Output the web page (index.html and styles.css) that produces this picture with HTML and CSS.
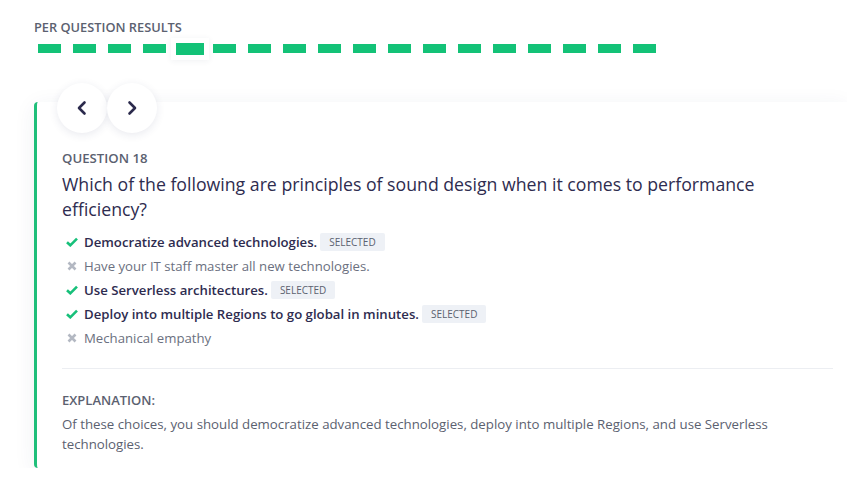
FILE: index.html
```html
<!DOCTYPE html>
<html>
<head>
<meta charset="utf-8">
<link rel="stylesheet" href="styles.css">
</head>
<body>
<div class="page">
  <div class="results-title">PER QUESTION RESULTS</div>
  <div class="dashes">
    <span class="dash"></span><span class="dash"></span><span class="dash"></span><span class="dash"></span>
    <span class="dash current"></span>
    <span class="dash"></span><span class="dash"></span><span class="dash"></span><span class="dash"></span>
    <span class="dash"></span><span class="dash"></span><span class="dash"></span><span class="dash"></span>
    <span class="dash"></span><span class="dash"></span><span class="dash"></span><span class="dash"></span>
    <span class="dash"></span>
  </div>

  <div class="card">
    <div class="nav">
      <button class="nav-btn" aria-label="Previous">
        <svg width="14" height="16" viewBox="0 0 14 16"><path d="M9.5 2.5 L4 8 L9.5 13.5" fill="none" stroke="#2b2a4c" stroke-width="2.6" stroke-linecap="round" stroke-linejoin="round"/></svg>
      </button>
      <button class="nav-btn" aria-label="Next">
        <svg width="14" height="16" viewBox="0 0 14 16"><path d="M4.5 2.5 L10 8 L4.5 13.5" fill="none" stroke="#2b2a4c" stroke-width="2.6" stroke-linecap="round" stroke-linejoin="round"/></svg>
      </button>
    </div>

    <div class="q-label">QUESTION 18</div>
    <h2 class="q-title">Which of the following are principles of sound design when it comes to performance efficiency?</h2>

    <ul class="options">
      <li class="opt correct">
        <svg class="ico" width="12" height="10" viewBox="0 0 12 10"><path d="M1 5.2 L4.3 8.3 L11 1.6" fill="none" stroke="#17c07a" stroke-width="2.6" stroke-linejoin="miter"/></svg>
        <span>Democratize advanced technologies.</span><span class="badge">SELECTED</span>
      </li>
      <li class="opt wrong">
        <svg class="ico" width="12" height="10" viewBox="0 0 12 10"><path d="M2.5 1.5 L9.5 8.5 M9.5 1.5 L2.5 8.5" fill="none" stroke="#b3b8c2" stroke-width="2.6"/></svg>
        <span>Have your IT staff master all new technologies.</span>
      </li>
      <li class="opt correct">
        <svg class="ico" width="12" height="10" viewBox="0 0 12 10"><path d="M1 5.2 L4.3 8.3 L11 1.6" fill="none" stroke="#17c07a" stroke-width="2.6" stroke-linejoin="miter"/></svg>
        <span>Use Serverless architectures.</span><span class="badge">SELECTED</span>
      </li>
      <li class="opt correct">
        <svg class="ico" width="12" height="10" viewBox="0 0 12 10"><path d="M1 5.2 L4.3 8.3 L11 1.6" fill="none" stroke="#17c07a" stroke-width="2.6" stroke-linejoin="miter"/></svg>
        <span>Deploy into multiple Regions to go global in minutes.</span><span class="badge">SELECTED</span>
      </li>
      <li class="opt wrong">
        <svg class="ico" width="12" height="10" viewBox="0 0 12 10"><path d="M2.5 1.5 L9.5 8.5 M9.5 1.5 L2.5 8.5" fill="none" stroke="#b3b8c2" stroke-width="2.6"/></svg>
        <span>Mechanical empathy</span>
      </li>
    </ul>

    <hr class="divider">

    <div class="exp-label">EXPLANATION:</div>
    <p class="exp-text">Of these choices, you should democratize advanced technologies, deploy into multiple Regions, and use Serverless technologies.</p>
  </div>
</div>
</body>
</html>
```

FILE: styles.css
```css
* { box-sizing: border-box; }
html, body { margin: 0; background: #ffffff; overflow: hidden; }
body { font-family: "Open Sans", "Noto Sans", sans-serif; color: #2e2c4f; }

.page { padding: 19px 0 0 34px; }

.results-title {
  font-size: 12.8px;
  line-height: 16px;
  font-weight: 600;
  color: #5b6170;
}

.dashes {
  display: flex;
  align-items: center;
  gap: 12px;
  height: 17px;
  margin: 5px 0 0 4px;
}
.dash {
  display: block;
  width: 23px;
  height: 9px;
  background: #13c277;
  flex: none;
}
.dash.current {
  width: 28px;
  height: 12px;
  margin: 0 -2.5px;
  box-shadow: 0 0 0 5px #fff, 0 1px 6px 5px rgba(40, 50, 90, 0.07);
}

.card {
  position: relative;
  margin-top: 45px;
  background: #fff;
  border-left: 3px solid #1fbf7a;
  border-radius: 4px 0 0 4px;
  box-shadow: 0 4px 22px rgba(40, 50, 100, 0.07);
  padding: 47px 14px 14px 25px;
}

.nav {
  position: absolute;
  top: -19px;
  left: 20px;
  display: flex;
}
.nav-btn {
  width: 50px;
  height: 50px;
  border-radius: 50%;
  border: none;
  background: #fff;
  box-shadow: 0 2px 9px rgba(40, 50, 100, 0.1);
  display: flex;
  align-items: center;
  justify-content: center;
  padding: 0;
}

.q-label {
  font-size: 13.2px;
  line-height: 18px;
  font-weight: 600;
  color: #5b6170;
}

.q-title {
  margin: 5px 0 0;
  max-width: 740px;
  font-size: 17.7px;
  line-height: 25px;
  font-weight: 500;
  color: #2e2c4f;
}

.options {
  list-style: none;
  margin: 8px 0 0;
  padding: 0 0 0 4px;
}
.opt {
  display: flex;
  align-items: center;
  height: 24px;
  font-size: 13.2px;
}
.opt .ico { flex: none; margin-right: 6px; }
.opt.correct { font-weight: 600; color: #2e2c4f; }
.opt.wrong { color: #6b7080; }

.badge {
  margin-left: 3px;
  background: #eef1f6;
  color: #5b6170;
  font-size: 10px;
  font-weight: 400;
  line-height: 18px;
  padding: 0 9px;
  border-radius: 2px;
}

.divider {
  border: none;
  border-top: 1px solid #eceef2;
  margin: 18px 0 0;
}

.exp-label {
  margin-top: 22px;
  font-size: 13px;
  line-height: 18px;
  font-weight: 600;
  color: #5b6170;
}
.exp-text {
  margin: 5px 0 0;
  font-size: 13.25px;
  line-height: 20px;
  color: #5b6170;
}
```
